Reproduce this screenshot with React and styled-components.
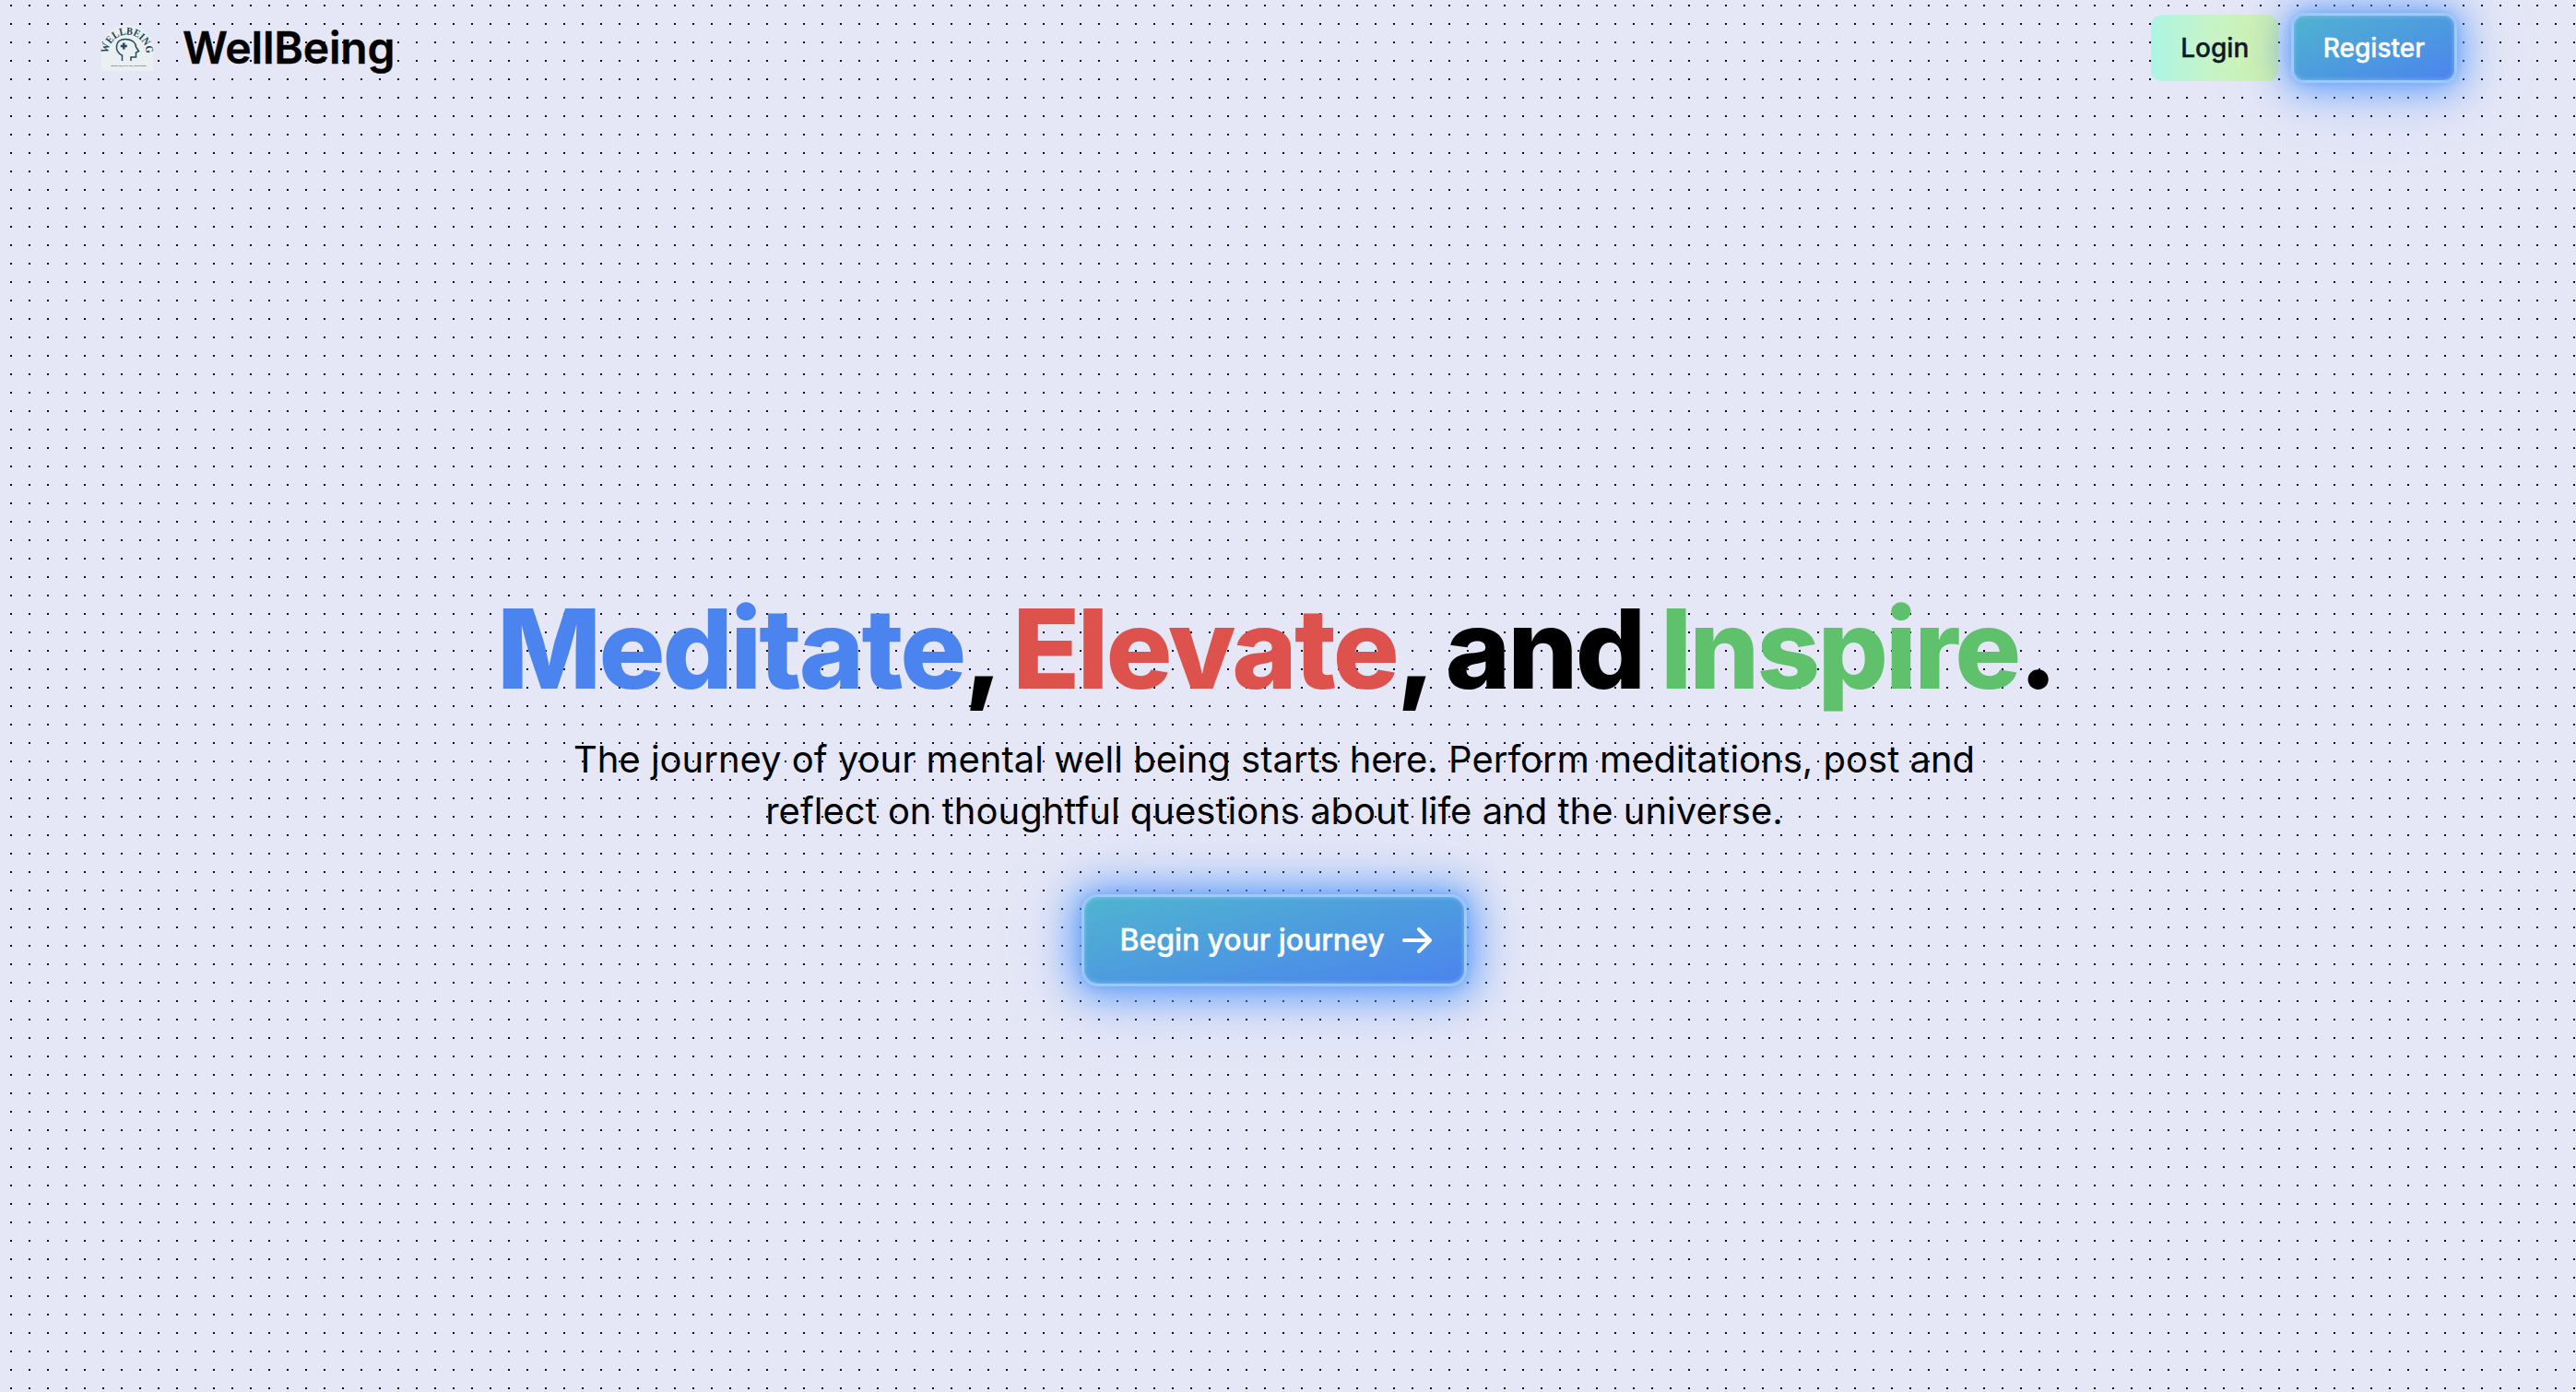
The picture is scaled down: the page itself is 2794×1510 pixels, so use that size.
import React from "react";
import styled, { createGlobalStyle } from "styled-components";

const GlobalStyle = createGlobalStyle`
  *, *::before, *::after { box-sizing: border-box; }
  body {
    margin: 0;
    color: #000;
    background-color: #e5e7f6;
    font-family: Inter, "Liberation Sans", sans-serif;
  }
`;

const Page = styled.div`
  height: 1510px;
  padding-right: 30px;
  display: flex;
  flex-direction: column;
  overflow: hidden;
  background: conic-gradient(from 90deg at 18px 18px, #0a0a33 90deg, transparent 0) -7px -13px / 20px 20px #e5e7f6;
`;

const Nav = styled.header`
  height: 104px;
  padding: 0 101.5px 0 104px;
  display: flex;
  align-items: center;
  justify-content: space-between;
`;

const Brand = styled.div`
  display: flex;
  align-items: center;
  gap: 26px;
`;

const BrandName = styled.span`
  font-size: 48px;
  line-height: 64px;
  font-weight: 600;
  letter-spacing: -0.2px;
  -webkit-text-stroke: 0.4px currentColor;
`;

const Actions = styled.div`
  display: flex;
  align-items: center;
  gap: 16px;
`;

const Button = styled.button`
  font-family: inherit;
  font-size: 28px;
  line-height: 40px;
  font-weight: 500;
  border: 0;
  padding: 0 32px;
  height: 72px;
  border-radius: 12px;
  white-space: nowrap;
  -webkit-text-stroke: 0.4px currentColor;
`;

const LoginButton = styled(Button)`
  color: #111827;
  background: linear-gradient(to right, #adf4e5, #c8f4c5 50%, #d5f2a8);
`;

const GlowButton = styled(Button)`
  display: flex;
  align-items: center;
  gap: 15px;
  color: #fff;
  font-size: ${(p) => (p.$large ? "32px" : "28px")};
  letter-spacing: ${(p) => (p.$large ? "-0.05px" : "0")};
  height: ${(p) => (p.$large ? "96px" : "72px")};
  padding: ${(p) => (p.$large ? "0 32px 0 39px" : "0 32.5px")};
  border-radius: ${(p) => (p.$large ? "16px" : "12px")};
  background: linear-gradient(to bottom right, #4fb5cf, #4b83ee);
  box-shadow:
    inset 0 0 0 1px rgba(160, 204, 250, 0.95),
    inset 0 0 5px 1px rgba(160, 204, 250, 0.7),
    0 0 0 2px #a0c8fb,
    0 0 12px 0 rgba(80, 150, 250, 0.6),
    0 2px 42px ${(p) => (p.$large ? "12px" : "8px")} rgba(80, 150, 250, 0.85),
    0 4px 100px 4px rgba(110, 150, 255, 0.2);
`;

const Hero = styled.main`
  flex: 1;
  padding-top: 540px;
  display: flex;
  flex-direction: column;
  align-items: center;
  text-align: center;
`;

const Title = styled.h1`
  margin: 0 0 0 4px;
  font-size: 120px;
  line-height: 120px;
  font-weight: 800;
  letter-spacing: -2.9px;
  word-spacing: -4.8px;
  white-space: nowrap;
`;

const Word = styled.span`
  color: ${(p) => p.$color};
`;

const Lead = styled.p`
  margin: 32px 0 64px;
  width: 1536px;
  font-size: 40px;
  line-height: 56px;
`;

const Logo = () => (
  <svg width="68" height="64" viewBox="0 0 68 64">
    <path d="M6 57V35A28 28 0 0 1 62 35V57Z" fill="#eaf0f2" />
    <path id="brand-arc" d="M13.5 38A20.5 20.5 0 0 1 54.5 38" fill="none" />
    <text fontFamily="Liberation Serif, serif" fontWeight="700" fontSize="11.5" fill="#1f4358">
      <textPath href="#brand-arc" textLength="64" lengthAdjust="spacingAndGlyphs">WELLBEING</textPath>
    </text>
    <g fill="none" stroke="#24485d" strokeWidth="1.5">
      <path d="M28.5 46V40C19.5 35.5 20.5 22.5 32 22.5C40 22.5 43.5 27 43.5 31L46.5 35.5L43.5 37V42H38V46" />
      <path d="M26.8 30H33.8M30.3 26.5V33.5" strokeWidth="2.6" />
    </g>
    <text x="35.5" y="52.3" textAnchor="middle" textLength="39" fontFamily="Liberation Serif, serif" fontWeight="700" fontSize="2.8" fill="#24485d">MEDITATE, ELEVATE, AND INSPIRE</text>
  </svg>
);

const Arrow = () => (
  <svg width="40" height="40" viewBox="0 0 40 40" fill="none" stroke="#fff" strokeWidth="4" strokeLinecap="round" strokeLinejoin="round">
    <path d="M6 20H34M22 8L34 20L22 32" />
  </svg>
);

export default function App() {
  return (
    <>
      <GlobalStyle />
      <Page>
        <Nav>
          <Brand>
            <Logo />
            <BrandName>WellBeing</BrandName>
          </Brand>
          <Actions>
            <LoginButton>Login</LoginButton>
            <GlowButton>Register</GlowButton>
          </Actions>
        </Nav>
        <Hero>
          <Title>
            <Word $color="#4b84ee">Meditate</Word>, <Word $color="#dd524c">Elevate</Word>, and{" "}
            <Word $color="#5fc16b">Inspire</Word>.
          </Title>
          <Lead>
            The journey of your mental well being starts here. Perform meditations, post and reflect on
            thoughtful questions about life and the universe.
          </Lead>
          <GlowButton $large>
            Begin your journey
            <Arrow />
          </GlowButton>
        </Hero>
      </Page>
    </>
  );
}
